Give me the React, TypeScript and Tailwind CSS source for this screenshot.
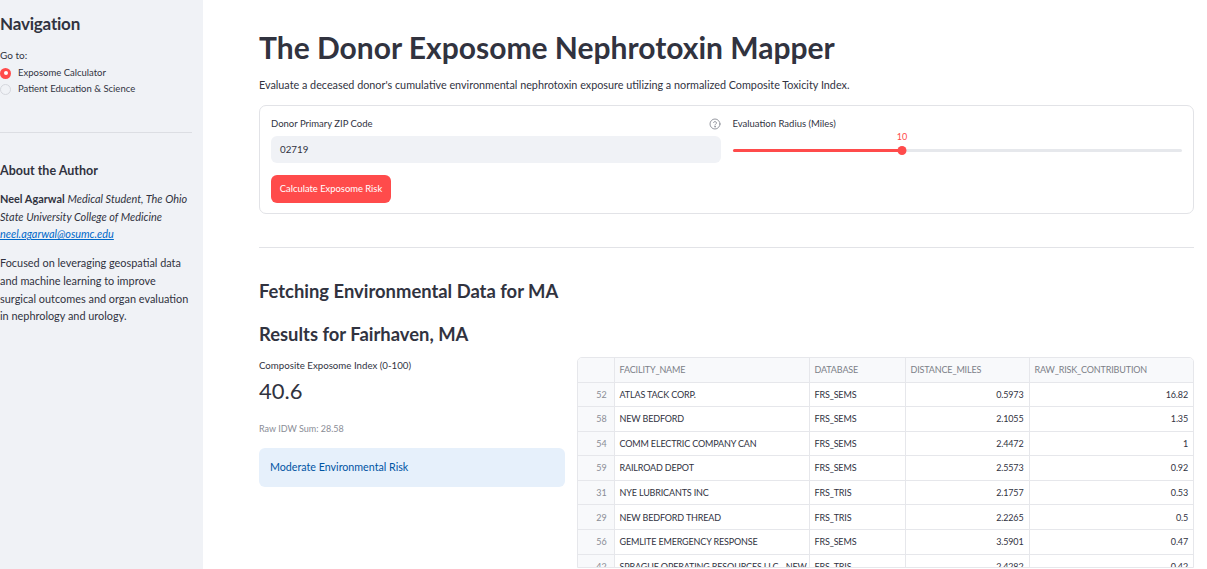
import React from 'react';

const font = { fontFamily: 'Lato, "Noto Sans", sans-serif' };

const rows = [
  { idx: 52, name: 'ATLAS TACK CORP.', db: 'FRS_SEMS', dist: '0.5973', risk: '16.82' },
  { idx: 58, name: 'NEW BEDFORD', db: 'FRS_SEMS', dist: '2.1055', risk: '1.35' },
  { idx: 54, name: 'COMM ELECTRIC COMPANY CAN', db: 'FRS_SEMS', dist: '2.4472', risk: '1' },
  { idx: 59, name: 'RAILROAD DEPOT', db: 'FRS_SEMS', dist: '2.5573', risk: '0.92' },
  { idx: 31, name: 'NYE LUBRICANTS INC', db: 'FRS_TRIS', dist: '2.1757', risk: '0.53' },
  { idx: 29, name: 'NEW BEDFORD THREAD', db: 'FRS_TRIS', dist: '2.2265', risk: '0.5' },
  { idx: 56, name: 'GEMLITE EMERGENCY RESPONSE', db: 'FRS_SEMS', dist: '3.5901', risk: '0.47' },
  { idx: 42, name: 'SPRAGUE OPERATING RESOURCES LLC - NEW BEDFORD', db: 'FRS_TRIS', dist: '2.4282', risk: '0.42' },
];

const HelpIcon = () => (
  <svg width="12" height="12" viewBox="0 0 24 24" fill="none" stroke="#8a8d96" strokeWidth="1.8" strokeLinecap="round">
    <circle cx="12" cy="12" r="10" />
    <path d="M9.1 9a3 3 0 0 1 5.8 1c0 2-3 2.6-3 4.2" />
    <circle cx="12" cy="17.5" r="0.6" fill="#8a8d96" />
  </svg>
);

const Sidebar = () => (
  <aside className="w-[203px] shrink-0 bg-[#f0f2f6] pr-[11px] text-[#31333f]">
    <h2 className="mt-[12px] text-[17px] font-bold leading-[24px] tracking-[-0.2px]">Navigation</h2>
    <div className="mt-[12px] text-[10px] leading-[14px]">Go to:</div>
    <div className="mt-[4px] flex flex-col gap-[2px] text-[9.5px] leading-[14px]">
      <label className="flex items-center gap-[7px]">
        <span className="flex h-[11px] w-[11px] items-center justify-center rounded-full bg-[#ff4b4b]">
          <span className="h-[4px] w-[4px] rounded-full bg-white" />
        </span>
        Exposome Calculator
      </label>
      <label className="flex items-center gap-[7px]">
        <span className="h-[11px] w-[11px] rounded-full border border-[#d5d7dd] bg-[#f0f2f6]" />
        Patient Education &amp; Science
      </label>
    </div>
    <hr className="mt-[36px] border-t border-[#dcdee3]" />
    <h3 className="mt-[29px] text-[12.5px] font-bold leading-[18px]">About the Author</h3>
    <p className="mt-[10px] text-[10.9px] leading-[17.5px]">
      <b className="font-bold">Neel Agarwal</b> <i>Medical Student, The Ohio State University College of Medicine</i>{' '}
      <a className="text-[#0068c9] italic underline">neel.agarwal@osumc.edu</a>
    </p>
    <p className="mt-[11.5px] text-[10.9px] leading-[17.8px]">
      Focused on leveraging geospatial data and machine learning to improve surgical outcomes and organ evaluation in nephrology and urology.
    </p>
  </aside>
);

const InputForm = () => (
  <div className="mt-[12px] rounded-[7px] border border-[#e2e3e7] px-[11px] pt-[11px] pb-[10px]">
    <div className="grid grid-cols-2 gap-[12px]">
      <div>
        <div className="flex h-[14px] items-center justify-between">
          <span className="text-[9.5px] leading-[14px]">Donor Primary ZIP Code</span>
          <HelpIcon />
        </div>
        <div className="mt-[5px] flex h-[27px] items-center rounded-[6px] bg-[#f0f2f6] px-[9px] text-[9.8px]">02719</div>
      </div>
      <div>
        <div className="text-[9.5px] leading-[14px]">Evaluation Radius (Miles)</div>
        <div className="relative h-[24px]">
          <span className="absolute left-[37.7%] top-0 -translate-x-1/2 text-[9px] leading-[12px] text-[#ff4b4b]">10</span>
          <div className="absolute left-0 right-0 top-[17.5px] h-[3px] rounded-full bg-[#e6e8ec]">
            <div className="h-full w-[37.7%] rounded-full bg-[#ff4b4b]" />
          </div>
          <span className="absolute left-[37.7%] top-[14.5px] h-[9px] w-[9px] -translate-x-1/2 rounded-full bg-[#ff4b4b]" />
        </div>
      </div>
    </div>
    <button className="mt-[12px] h-[28px] w-[120px] rounded-[6px] bg-[#ff4b4b] text-[9.4px] text-white">
      Calculate Exposome Risk
    </button>
  </div>
);

const DataTable = () => (
  <div className="h-[211px] overflow-hidden rounded-t-[5px] border border-[#e6e7eb] text-[9px] tracking-[-0.15px]">
    <table className="w-full table-fixed border-collapse">
      <colgroup>
        <col className="w-[36px]" />
        <col className="w-[195px]" />
        <col className="w-[96px]" />
        <col className="w-[124px]" />
        <col />
      </colgroup>
      <thead>
        <tr className="h-[24px] bg-[#f8f9fb] text-left text-[#7c7f88]">
          <th className="border-b border-r border-[#e6e7eb] font-normal" />
          <th className="border-b border-r border-[#e6e7eb] px-[5px] font-normal">FACILITY_NAME</th>
          <th className="border-b border-r border-[#e6e7eb] px-[5px] font-normal">DATABASE</th>
          <th className="border-b border-r border-[#e6e7eb] px-[5px] font-normal">DISTANCE_MILES</th>
          <th className="border-b border-[#e6e7eb] px-[5px] font-normal">RAW_RISK_CONTRIBUTION</th>
        </tr>
      </thead>
      <tbody>
        {rows.map((r) => (
          <tr key={r.idx} className="h-[24.6px]">
            <td className="border-b border-r border-[#e6e7eb] bg-[#f8f9fb] pr-[7px] text-right text-[#8a8d96]">{r.idx}</td>
            <td className="overflow-hidden border-b border-r border-[#e6e7eb] px-[5px] whitespace-nowrap">{r.name}</td>
            <td className="border-b border-r border-[#e6e7eb] px-[5px]">{r.db}</td>
            <td className="border-b border-r border-[#e6e7eb] px-[5px] text-right">{r.dist}</td>
            <td className="border-b border-[#e6e7eb] px-[5px] text-right">{r.risk}</td>
          </tr>
        ))}
      </tbody>
    </table>
  </div>
);

export default function App() {
  return (
    <div className="flex h-[569px] overflow-hidden bg-white text-[#31333f]" style={font}>
      <Sidebar />
      <main className="flex-1 pl-[56px] pr-[13px]">
        <h1 className="mt-[29px] text-[30px] font-bold leading-[36px]">The Donor Exposome Nephrotoxin Mapper</h1>
        <p className="mt-[12px] text-[10.8px] leading-[16px]">
          Evaluate a deceased donor's cumulative environmental nephrotoxin exposure utilizing a normalized Composite Toxicity Index.
        </p>
        <InputForm />
        <hr className="mt-[33px] border-t border-[#e2e3e7]" />
        <h2 className="mt-[31px] text-[18.4px] font-bold leading-[24px]">Fetching Environmental Data for MA</h2>
        <h2 className="mt-[19px] text-[18.4px] font-bold leading-[24px]">Results for Fairhaven, MA</h2>
        <div className="mt-[11px] flex gap-[12px]">
          <div className="w-[306px] shrink-0 pt-[1px]">
            <div className="text-[9.7px] leading-[14px]">Composite Exposome Index (0-100)</div>
            <div className="mt-[5px] text-[22px] leading-[28px]">40.6</div>
            <div className="mt-[18px] text-[9px] leading-[12px] text-[#8a8d96]">Raw IDW Sum: 28.58</div>
            <div className="mt-[13px] flex h-[39px] items-center rounded-[6px] bg-[#e6f0fb] px-[11px] text-[10.7px] text-[#0054a3]">
              Moderate Environmental Risk
            </div>
          </div>
          <div className="flex-1">
            <DataTable />
          </div>
        </div>
      </main>
    </div>
  );
}
